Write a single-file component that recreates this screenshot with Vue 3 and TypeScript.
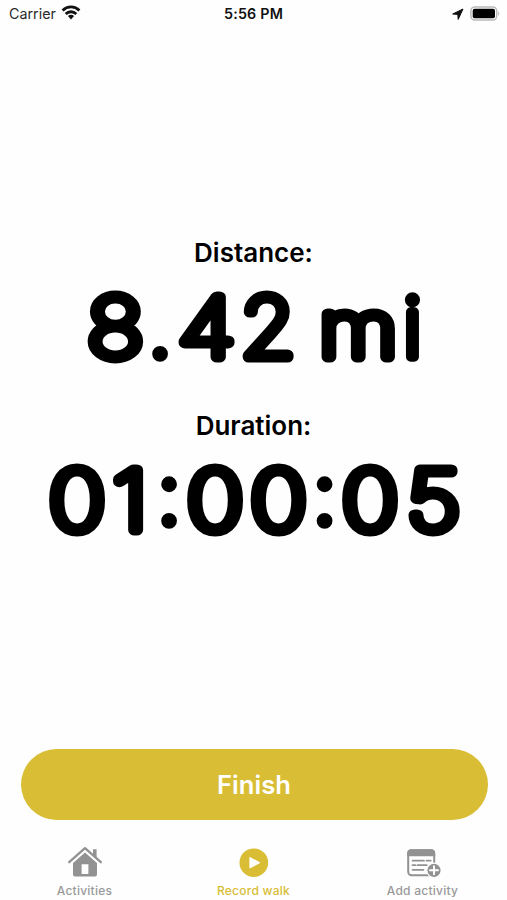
<script setup lang="ts">
interface Metric {
  label: string
  value: string
  centers: number[]
}

interface Glyph {
  char: string
  transform: string
  kind: string
}

// Horizontal stretch that gives each glyph its wide, rounded proportions
const stretch: Record<string, number> = {
  '0': 1.17,
  '1': 1.15,
  '2': 1.08,
  '4': 1.17,
  '5': 1.15,
  '8': 1.15,
  m: 1.14,
}
const baseline = 84

const metrics: Metric[] = [
  {
    label: 'Distance:',
    value: '8.42 mi',
    centers: [115.5, 160, 206.5, 268, 305, 358.3, 412.5],
  },
  {
    label: 'Duration:',
    value: '01:00:05',
    centers: [77, 130, 169, 215, 278.5, 324.5, 370, 433.5],
  },
]

const kinds: Record<string, string> = { '.': 'dot', ':': 'dot', i: 'dot', m: 'letter' }

const glyphs = (m: Metric): Glyph[] =>
  [...m.value].map((char, i) => ({
    char,
    transform: `translate(${m.centers[i]} ${char === ':' ? baseline - 6 : baseline}) scale(${stretch[char] ?? 1} 1)`,
    kind: kinds[char] ?? 'digit',
  }))
</script>

<template>
  <main class="screen">
    <header class="status">
      <div class="carrier">
        <span>Carrier</span>
        <svg width="20" height="15" viewBox="0 0 20 15">
          <g fill="none" stroke="#111" stroke-width="2.8">
            <path d="M1.6 5.4a12 12 0 0 1 16.8 0" />
            <path d="M4.7 8.9a7.6 7.6 0 0 1 10.6 0" />
          </g>
          <path d="M6.9 11.1a4.5 4.5 0 0 1 6.2 0L10 14.4z" fill="#111" />
        </svg>
      </div>
      <time class="clock">5:56 PM</time>
      <div class="indicators">
        <svg width="12" height="12" viewBox="0 0 12 12">
          <path d="M11 1 .7 6 5.8 6.4 6.2 11.4z" fill="#111" stroke="#111" stroke-width="1" stroke-linejoin="round" />
        </svg>
        <svg width="31" height="15" viewBox="0 0 31 15">
          <rect x=".9" y=".9" width="25.8" height="13.2" rx="4" fill="#fff" stroke="#b9b9b9" stroke-width="1.5" />
          <rect x="2.7" y="2.7" width="22.3" height="9.6" rx="2" />
          <path d="M28.2 5q2.2 2.5 0 5z" fill="#b9b9b9" />
        </svg>
      </div>
    </header>

    <section class="metrics">
      <div v-for="m in metrics" :key="m.label" class="metric">
        <h2>{{ m.label }}</h2>
        <svg class="value" width="507" height="120" viewBox="0 0 507 120">
          <text v-for="(g, i) in glyphs(m)" :key="i" :class="g.kind" :transform="g.transform">{{ g.char }}</text>
        </svg>
      </div>
    </section>

    <button class="finish" type="button">Finish</button>

    <nav class="tabs">
      <a class="tab">
        <svg width="36" height="34" viewBox="0 0 36 34">
          <path d="M2.2 17.2 18 3.2l15.8 14" fill="none" stroke="#929292" stroke-width="2.3" stroke-linecap="round" stroke-linejoin="round" />
          <path d="M26 4.3h3.6v8.8L26 9.8z" fill="#929292" />
          <path d="M18 7.4 30 18v11.5q0 2-2 2H8q-2 0-2-2V18zM14.6 19.3v9.7h6.8v-9.7z" fill="#929292" fill-rule="evenodd" />
        </svg>
        <span>Activities</span>
      </a>
      <a class="tab active">
        <svg width="36" height="34" viewBox="0 0 36 34">
          <circle cx="17.8" cy="17.7" r="14.3" fill="#d8bd35" />
          <path d="M14 12.7v10l9.4-5z" fill="#fff" stroke="#fff" stroke-width="1.3" stroke-linejoin="round" />
        </svg>
        <span>Record walk</span>
      </a>
      <a class="tab">
        <svg width="36" height="34" viewBox="0 0 36 34">
          <rect x="3.2" y="5.3" width="26" height="25" rx="3.5" fill="#fff" stroke="#929292" stroke-width="2" />
          <path d="M2.2 11.3V8q0-3.8 3.8-3.8h20.4q3.8 0 3.8 3.8v3.3z" fill="#929292" />
          <path d="M7.5 15.7H19M21.5 15.7h4.3M7.5 20.2h3M12.5 20.2h9.3M7.5 24.8h11" stroke="#929292" stroke-width="1.7" stroke-linecap="round" />
          <circle cx="29" cy="25.3" r="7.2" fill="#929292" stroke="#fff" stroke-width="1.2" />
          <path d="M29 21.3v8M25 25.3h8" stroke="#fff" stroke-width="1.9" stroke-linecap="round" />
        </svg>
        <span>Add activity</span>
      </a>
    </nav>
  </main>
</template>

<style>
body {
  background: #fefefe;
}
</style>

<style scoped>
.screen {
  display: flex;
  flex-direction: column;
  width: 507px;
  height: 900px;
  overflow: hidden;
  background: #fefefe;
  color: #000;
  font-family: Inter, "Liberation Sans", sans-serif;
}
.status {
  display: grid;
  grid-template-columns: 1fr auto 1fr;
  align-items: center;
  height: 27px;
  padding: 0 6px 0 9px;
  font-size: 14.3px;
  color: #111;
}
.carrier {
  display: flex;
  align-items: center;
  gap: 5px;
  color: #2a2a2a;
}
.carrier svg {
  margin-top: -2px;
}
.clock {
  margin-right: 3px;
  font-size: 14.3px;
  font-weight: 600;
  letter-spacing: 0.2px;
}
.indicators {
  display: flex;
  align-items: center;
  justify-content: flex-end;
  gap: 6px;
}
.metrics {
  flex: 1;
  min-height: 0;
  padding-top: 210px;
}
.metric {
  height: 172.5px;
}
h2 {
  height: 32px;
  margin: 0 0 4px;
  font-size: 26px;
  font-weight: 600;
  line-height: 32px;
  text-align: center;
}
.value {
  display: block;
}
.value text {
  font-size: 82px;
  font-weight: 100;
  text-anchor: middle;
  fill: #000;
  stroke: #000;
  stroke-width: 11.2px;
  stroke-linejoin: round;
}
.value .letter {
  font-size: 79px;
}
.value .dot {
  font-weight: 200;
  stroke-width: 9.4px;
}
.finish {
  flex: none;
  height: 71px;
  margin: 0 19.5px 0 20.5px;
  padding: 0;
  border: 0;
  border-radius: 36px;
  background: #d8bd35;
  color: #fff;
  font: 600 25.6px/71px Inter, "Liberation Sans", sans-serif;
}
.tabs {
  display: grid;
  flex: none;
  grid-template-columns: repeat(3, 1fr);
  height: 80px;
}
.tab {
  display: flex;
  flex-direction: column;
  align-items: center;
  padding-top: 25px;
  color: #999;
  font-size: 12px;
  font-weight: 500;
  letter-spacing: 0.25px;
}
.tab span {
  margin-top: 4px;
  line-height: 16px;
}
.active {
  color: #d8bd35;
}
</style>
